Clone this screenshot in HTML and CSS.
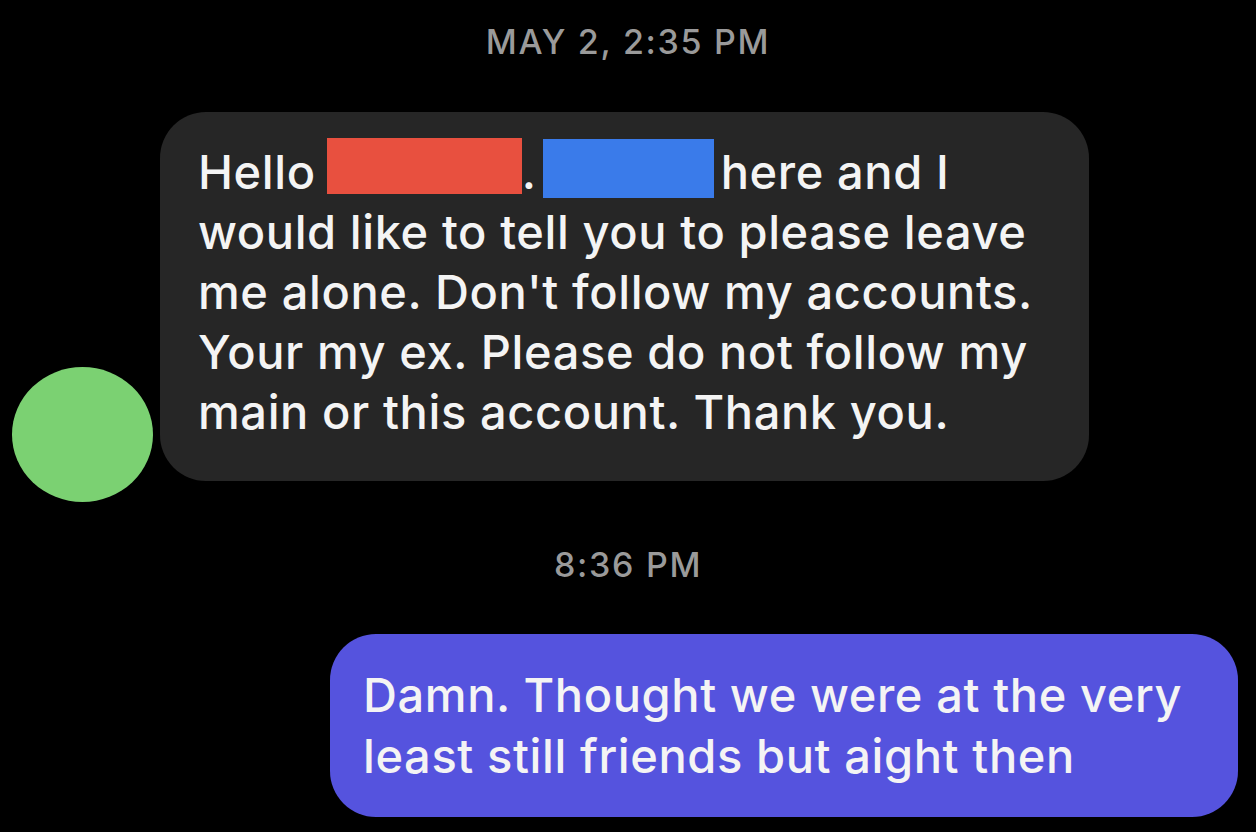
FILE: index.html
```html
<!DOCTYPE html>
<html>
<head>
<meta charset="utf-8">
<link rel="stylesheet" href="styles.css">
</head>
<body>
<div class="chat">
  <div class="ts ts-first">MAY 2, 2:35 PM</div>
  <div class="row-in">
    <div class="avatar"></div>
    <div class="bubble bubble-in">Hello <span class="redact red"></span>.<span class="redact blue"></span>here and I<br>would like to tell you to please leave<br>me alone. Don't follow my accounts.<br>Your my ex. Please do not follow my<br>main or this account. Thank you.</div>
  </div>
  <div class="ts ts-second">8:36 PM</div>
  <div class="bubble bubble-out">Damn. Thought we were at the very<br>least still friends but aight then</div>
</div>
</body>
</html>
```
FILE: styles.css
```css
html, body {
  margin: 0;
  padding: 0;
  background: #000;
}
body {
  width: 1256px;
  height: 832px;
  overflow: hidden;
  font-family: Inter, "Liberation Sans", Arial, sans-serif;
  color: #f4f4f4;
}
.chat {
  display: flex;
  flex-direction: column;
}
.ts {
  text-align: center;
  font-size: 34px;
  font-weight: 500;
  letter-spacing: 1.7px;
  line-height: 40px;
  color: #9a9a9a;
}
.ts-first {
  padding-top: 22px;
  margin-bottom: 50px;
}
.ts-second {
  margin-top: 43px;
  margin-bottom: 49px;
}
.row-in {
  display: flex;
  align-items: flex-end;
  padding-left: 12px;
  gap: 7px;
}
.avatar {
  width: 141px;
  height: 135px;
  border-radius: 50%;
  background: #7bd172;
  flex: none;
}
.bubble {
  box-sizing: border-box;
  font-size: 47px;
  font-weight: 500;
  letter-spacing: 0.6px;
  border-radius: 46px;
  white-space: nowrap;
}
.bubble-in {
  width: 929px;
  background: #262626;
  line-height: 60px;
  padding: 30px 40px 39px 38px;
  margin-bottom: 21px;
}
.redact {
  display: inline-block;
  margin-top: -14px;
}
.red {
  width: 195px;
  height: 56px;
  background: #e8503f;
  vertical-align: -5px;
  margin-left: -2px;
}
.blue {
  width: 171px;
  height: 59px;
  background: #3a7bea;
  vertical-align: -9px;
  margin-left: 6px;
  margin-right: 7px;
}
.bubble-out {
  align-self: flex-end;
  margin-right: 18px;
  width: 908px;
  background: #5553de;
  line-height: 61px;
  padding: 30px 30px 31px 33px;
}
```
